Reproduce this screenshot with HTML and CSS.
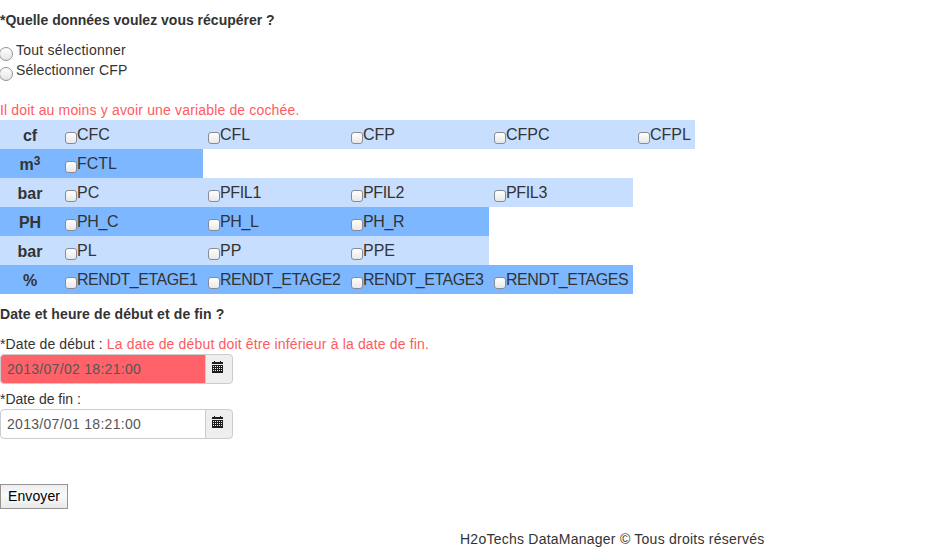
FILE: index.html
```html
<!DOCTYPE html>
<html lang="fr">
<head>
<meta charset="utf-8">
<title>H2oTechs DataManager</title>
<link rel="stylesheet" href="styles.css">
</head>
<body>
<svg width="0" height="0" class="defs" aria-hidden="true">
  <symbol id="calendar" viewBox="0 0 11 12">
    <path fill="#1c1c1c" d="M0 1h2V0h1v1h5V0h1v1h2v2H0zM0 4h11v8H0z"/>
    <path fill="#eee" d="M1 5h1v1H1zM3 5h1v1H3zM5 5h1v1H5zM7 5h1v1H7zM9 5h1v1H9zM1 7h1v1H1zM3 7h1v1H3zM5 7h1v1H5zM7 7h1v1H7zM9 7h1v1H9zM1 9h1v1H1zM3 9h1v1H3zM5 9h1v1H5zM7 9h1v1H7zM9 9h1v1H9z"/>
  </symbol>
</svg>
<form>
  <h2>*Quelle données voulez vous récupérer ?</h2>
  <div class="choices">
    <label class="wide"><input type="radio" name="sel">Tout sélectionner</label>
    <label class="snug"><input type="radio" name="sel">Sélectionner CFP</label>
  </div>
  <p class="error">Il doit au moins y avoir une variable de cochée.</p>
  <table>
    <colgroup><col class="unit"><col class="var"><col class="var"><col class="var"><col class="var-wide"><col class="last"></colgroup>
    <tr class="light"><th>cf</th><td><label><input type="checkbox">CFC</label></td><td><label><input type="checkbox">CFL</label></td><td><label><input type="checkbox">CFP</label></td><td><label><input type="checkbox">CFPC</label></td><td><label><input type="checkbox">CFPL</label></td></tr>
    <tr class="dark"><th>m<sup>3</sup></th><td><label><input type="checkbox">FCTL</label></td></tr>
    <tr class="light"><th>bar</th><td><label><input type="checkbox">PC</label></td><td><label class="fil"><input type="checkbox">PFIL1</label></td><td><label class="fil"><input type="checkbox">PFIL2</label></td><td><label class="fil"><input type="checkbox">PFIL3</label></td></tr>
    <tr class="dark"><th>PH</th><td><label class="fil"><input type="checkbox">PH_C</label></td><td><label class="fil"><input type="checkbox">PH_L</label></td><td><label class="fil"><input type="checkbox">PH_R</label></td></tr>
    <tr class="light"><th>bar</th><td><label><input type="checkbox">PL</label></td><td><label><input type="checkbox">PP</label></td><td><label><input type="checkbox">PPE</label></td></tr>
    <tr class="dark"><th>%</th><td><label class="rendt"><input type="checkbox">RENDT_ETAGE1</label></td><td><label class="rendt"><input type="checkbox">RENDT_ETAGE2</label></td><td><label class="rendt"><input type="checkbox">RENDT_ETAGE3</label></td><td><label class="rendt"><input type="checkbox">RENDT_ETAGES</label></td></tr>
  </table>
  <h2 class="snug">Date et heure de début et de fin ?</h2>
  <div class="field">
    <p><span class="snug">*Date de début : </span><span class="error">La date de début doit être inférieur à la date de fin.</span></p>
    <div class="date"><input class="invalid" type="text" value="2013/07/02 18:21:00"><span class="addon"><svg><use href="#calendar"/></svg></span></div>
  </div>
  <div class="field">
    <p>*Date de fin :</p>
    <div class="date"><input type="text" value="2013/07/01 18:21:00"><span class="addon"><svg><use href="#calendar"/></svg></span></div>
  </div>
  <button type="button">Envoyer</button>
</form>
<footer class="wide">H2oTechs DataManager © Tous droits réservés</footer>
</body>
</html>
```
FILE: styles.css
```css
* { box-sizing: border-box; }
body {
  margin: 0;
  height: 552px;
  overflow: hidden;
  background: #fff;
  color: #333;
  font: 14px/20px "Liberation Sans", Arial, sans-serif;
}
form { padding-top: 10px; }
.defs { display: block; }
h2 { margin: 0; font-size: 14px; line-height: 20px; white-space: nowrap; }
p { margin: 0; white-space: nowrap; }
input { appearance: none; margin: 0; }
.snug { letter-spacing: .1px; }
.wide { letter-spacing: .24px; }
.choices { margin: 10px 0 20px; }
.choices label { display: flex; height: 20px; }
.choices input {
  width: 14px;
  height: 14px;
  margin: 7px 3px 0 -1px;
  border: 1px solid #929292;
  border-radius: 50%;
  background: linear-gradient(#fff, #e4e4e4);
}
.error { color: #ff5a60; letter-spacing: .16px; }
table {
  width: 695px;
  table-layout: fixed;
  border-collapse: collapse;
  font-size: 16px;
}
.unit { width: 60px; }
.var { width: 143px; }
.var-wide { width: 144px; }
.last { width: 62px; }
th, td { height: 29px; padding: 0; vertical-align: top; }
th { padding-top: 2px; line-height: 27px; text-align: center; }
sup { position: relative; top: -5px; font-size: 12px; line-height: 0; vertical-align: baseline; }
td label { display: flex; height: 29px; padding-left: 5px; line-height: 29px; white-space: nowrap; }
td input {
  flex: none;
  width: 12px;
  height: 12px;
  margin-top: 12px;
  border: 1px solid #858b98;
  border-radius: 3px;
  background: linear-gradient(#fff, #e8e8e8);
}
.fil { letter-spacing: -.35px; }
.rendt { letter-spacing: -.46px; }
.light th, .light td { background: #c8deff; }
.dark th, .dark td { background: #7cb7ff; }
table + h2 { margin: 10px 0; }
.field { height: 55px; }
.date { display: flex; }
.date input {
  width: 206px;
  height: 30px;
  padding: 0 6px;
  border: 1px solid #ccc;
  border-radius: 4px 0 0 4px;
  background: #fff;
  color: #555;
  font: 14px/20px "Liberation Sans", Arial, sans-serif;
  letter-spacing: .3px;
}
.date .invalid { background: #ff6268; }
.addon {
  width: 28px;
  height: 30px;
  margin-left: -1px;
  padding: 6px 0 0 6px;
  border: 1px solid #ccc;
  border-radius: 0 4px 4px 0;
  background: #eee;
}
.addon svg { display: block; width: 11px; height: 12px; }
button {
  display: block;
  width: 68px;
  height: 25px;
  margin-top: 40px;
  padding: 0 0 2px;
  border: 1px solid #949494;
  background: linear-gradient(#eee, #fafafa 45%, #e9e9e9);
  color: #000;
  font: 14px/20px "Liberation Sans", Arial, sans-serif;
  letter-spacing: .1px;
}
footer { margin: 20px 0 0 460px; white-space: nowrap; }
```
